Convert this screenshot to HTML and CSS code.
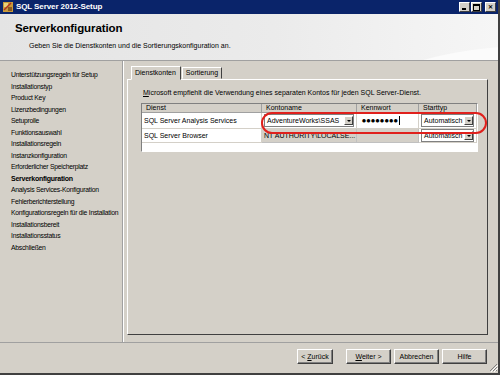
FILE: index.html
```html
<!DOCTYPE html>
<html lang="de">
<head>
  <meta charset="UTF-8">
  <title>SQL Server 2012-Setup</title>
  <link rel="stylesheet" href="styles.css">
</head>
<body>
  <div class="window">
    <div class="titlebar">
      <svg class="app-icon" width="10" height="10" viewBox="0 0 10 10">
        <rect x="0" y="0" width="10" height="10" fill="#c89a3a"/>
        <rect x="1" y="1" width="4" height="4" fill="#e8d27a"/>
        <rect x="5" y="5" width="4" height="4" fill="#8a5a20"/>
        <path d="M1 8 L8 1" stroke="#b03020" stroke-width="1.5"/>
      </svg>
      <span class="title">SQL Server 2012-Setup</span>
      <div class="caption-buttons">
        <span class="cap-btn"><i class="min"></i></span>
        <span class="cap-btn"><i class="max"></i></span>
        <span class="cap-btn close">&#x2715;</span>
      </div>
    </div>

    <div class="header">
      <h1>Serverkonfiguration</h1>
      <p>Geben Sie die Dienstkonten und die Sortierungskonfiguration an.</p>
    </div>

    <div class="main">
      <ul class="steps">
        <li>Unterstützungsregeln für Setup</li>
        <li>Installationstyp</li>
        <li>Product Key</li>
        <li>Lizenzbedingungen</li>
        <li>Setuprolle</li>
        <li>Funktionsauswahl</li>
        <li>Installationsregeln</li>
        <li>Instanzkonfiguration</li>
        <li>Erforderlicher Speicherplatz</li>
        <li class="current">Serverkonfiguration</li>
        <li>Analysis Services-Konfiguration</li>
        <li>Fehlerberichterstellung</li>
        <li>Konfigurationsregeln für die Installation</li>
        <li>Installationsbereit</li>
        <li>Installationsstatus</li>
        <li>Abschließen</li>
      </ul>

      <div class="content">
        <div class="tabs">
          <span class="tab active">Dienstkonten</span>
          <span class="tab">Sortierung</span>
        </div>
        <div class="tab-panel">
          <p class="hint"><u>M</u>icrosoft empfiehlt die Verwendung eines separaten Kontos für jeden SQL Server-Dienst.</p>
          <div class="grid-wrap">
            <div class="grid">
              <div class="th">Dienst</div>
              <div class="th">Kontoname</div>
              <div class="th">Kennwort</div>
              <div class="th">Starttyp</div>

              <div class="td">SQL Server Analysis Services</div>
              <div class="td"><span class="combo">AdventureWorks\SSAS<b class="drop"></b></span></div>
              <div class="td white"><span class="pwd">&#x25CF;&#x25CF;&#x25CF;&#x25CF;&#x25CF;&#x25CF;&#x25CF;&#x25CF;</span><span class="caret"></span></div>
              <div class="td"><span class="combo">Automatisch<b class="drop"></b></span></div>

              <div class="td">SQL Server Browser</div>
              <div class="td grey">NT AUTHORITY\LOCALSE...</div>
              <div class="td grey"></div>
              <div class="td"><span class="combo">Automatisch<b class="drop"></b></span></div>
            </div>
            <div class="highlight"></div>
          </div>
        </div>
      </div>
    </div>

    <div class="footer">
      <button>&lt; <u>Z</u>urück</button>
      <button><u>W</u>eiter &gt;</button>
      <button>Abbrechen</button>
      <button>Hilfe</button>
      <svg class="grip" width="9" height="9" viewBox="0 0 9 9">
        <path d="M8 1 L1 8 M8 4 L4 8 M8 7 L7 8" stroke="#808080" stroke-width="1"/>
        <path d="M9 2 L2 9 M9 5 L5 9" stroke="#fff" stroke-width="1"/>
      </svg>
    </div>
  </div>
</body>
</html>
```

FILE: styles.css
```css
body {
  margin: 0;
  font-family: "Liberation Sans", Arial, sans-serif;
  font-size: 7px;
  color: #000;
  background: #d4d0c8;
}

.window {
  width: 498px;
  height: 373px;
  background: #d4d0c8;
  border-right: 2px solid #404040;
  border-bottom: 2px solid #404040;
  display: flex;
  flex-direction: column;
}

.titlebar {
  height: 13px;
  background: #0a246a;
  display: flex;
  align-items: center;
  padding-left: 3px;
  border-bottom: 1px solid #0a246a;
}

.app-icon {
  margin-right: 3px;
}

.title {
  color: #fff;
  font-weight: bold;
  font-size: 8px;
  letter-spacing: -0.1px;
}

.caption-buttons {
  margin-left: auto;
  display: flex;
  gap: 1px;
  margin-right: 2px;
}

.cap-btn {
  width: 9px;
  height: 8px;
  background: #d4d0c8;
  border: 1px solid;
  border-color: #fff #404040 #404040 #fff;
  position: relative;
  font-size: 6px;
  line-height: 8px;
  text-align: center;
  font-weight: bold;
}

.cap-btn .min {
  position: absolute;
  left: 2px;
  bottom: 1px;
  width: 4px;
  height: 2px;
  background: #000;
}

.cap-btn .max {
  position: absolute;
  left: 1px;
  top: 1px;
  width: 5px;
  height: 4px;
  border: 1px solid #000;
  border-top-width: 2px;
}

.cap-btn.close {
  margin-left: 2px;
}

.header {
  height: 46px;
  background:
    radial-gradient(ellipse 260px 90px at 540px 95px, #fbfbfb 70%, transparent 71%),
    linear-gradient(to right, #e4e4e4, #ebebeb 55%, #f6f6f6);
  border-bottom: 1px solid #a0a0a0;
  padding-left: 15px;
}

.header h1 {
  margin: 8px 0 0;
  font-size: 11.5px;
  font-weight: bold;
  letter-spacing: -0.1px;
}

.header p {
  margin: 8px 0 0 14px;
  font-size: 7px;
}

.main {
  flex: 1;
  display: flex;
  border-bottom: 1px solid #a0a0a0;
}

.steps {
  list-style: none;
  margin: 0;
  padding: 8px 0 0 11px;
  width: 114px;
  border-right: 1px solid #a0a0a0;
}

.steps li {
  height: 11.5px;
  line-height: 11.5px;
  white-space: nowrap;
  letter-spacing: -0.25px;
  font-size: 6.8px;
}

.steps li.current {
  font-weight: bold;
  font-size: 7px;
}

.content {
  flex: 1;
  padding: 6px 10px 7px 3px;
  display: flex;
  flex-direction: column;
  border-left: 1px solid #fff;
}

.tabs {
  display: flex;
  padding-left: 4px;
  height: 12px;
  align-items: flex-end;
}

.tab {
  height: 10px;
  line-height: 10px;
  padding: 0 3px;
  border: 1px solid;
  border-color: #fff #404040 transparent #fff;
  margin-right: 1px;
}

.tab.active {
  height: 12px;
  line-height: 12px;
  background: #d4d0c8;
  margin-bottom: -1px;
  position: relative;
  padding: 0 4px 0 3px;
}

.tab-panel {
  flex: 1;
  border: 1px solid;
  border-color: #fff #404040 #404040 #fff;
  padding: 0 9px 0 13px;
}

.hint {
  margin: 9px 0 7px 2px;
  font-size: 7px;
}

.grid-wrap {
  position: relative;
}

.grid {
  display: grid;
  grid-template-columns: 120px 95px 62px 58px;
  grid-template-rows: 9px 16px 14px;
  padding-bottom: 8px;
  background: #fff;
  border: 1px solid;
  border-color: #808080 #fff #fff #808080;
  width: 335px;
}

.th {
  background: #d4d0c8;
  border-right: 1px solid #a0a0a0;
  border-bottom: 1px solid #a0a0a0;
  padding-left: 4px;
  line-height: 8px;
  overflow: hidden;
}

.td {
  display: flex;
  align-items: center;
  padding-left: 2px;
  border-bottom: 1px solid #d4d0c8;
  border-right: 1px solid #d4d0c8;
  white-space: nowrap;
  overflow: hidden;
}

.td.grey {
  background: #d4d0c8;
  border-color: #c0c0c0;
}

.combo {
  flex: 1;
  height: 11px;
  display: flex;
  align-items: center;
  border: 1px solid #808080;
  background: #fff;
  padding-left: 2px;
  margin-right: 2px;
}

.drop {
  margin-left: auto;
  width: 9px;
  height: 9px;
  background: #d4d0c8;
  border: 1px solid;
  border-color: #fff #404040 #404040 #fff;
  box-sizing: border-box;
  position: relative;
}

.drop::after {
  content: "";
  position: absolute;
  left: 2px;
  top: 3px;
  border-left: 2px solid transparent;
  border-right: 2px solid transparent;
  border-top: 2px solid #000;
}

.pwd {
  font-family: "DejaVu Sans", sans-serif;
  font-size: 4.5px;
  letter-spacing: 0.6px;
  padding-left: 3px;
}

.caret {
  width: 1px;
  height: 9px;
  background: #000;
  margin-left: 1px;
}

.highlight {
  position: absolute;
  left: 120px;
  top: 9px;
  width: 222px;
  height: 18px;
  border: 2px solid #e0201c;
  border-radius: 11px;
}

.footer {
  height: 30px;
  display: flex;
  justify-content: flex-end;
  align-items: flex-start;
  padding: 6px 0 0 0;
  box-sizing: border-box;
  gap: 3px;
}

.footer button {
  width: 45px;
  height: 15px;
  font-family: inherit;
  font-size: 7px;
  background: #d4d0c8;
  border: 1px solid;
  border-color: #fff #404040 #404040 #fff;
  box-shadow: inset -1px -1px #808080;
  padding: 0;
}

.footer button:first-child {
  width: 36px;
  margin-right: 10px;
}

.grip {
  align-self: flex-end;
  margin: 0 0 1px -1px;
}
```
